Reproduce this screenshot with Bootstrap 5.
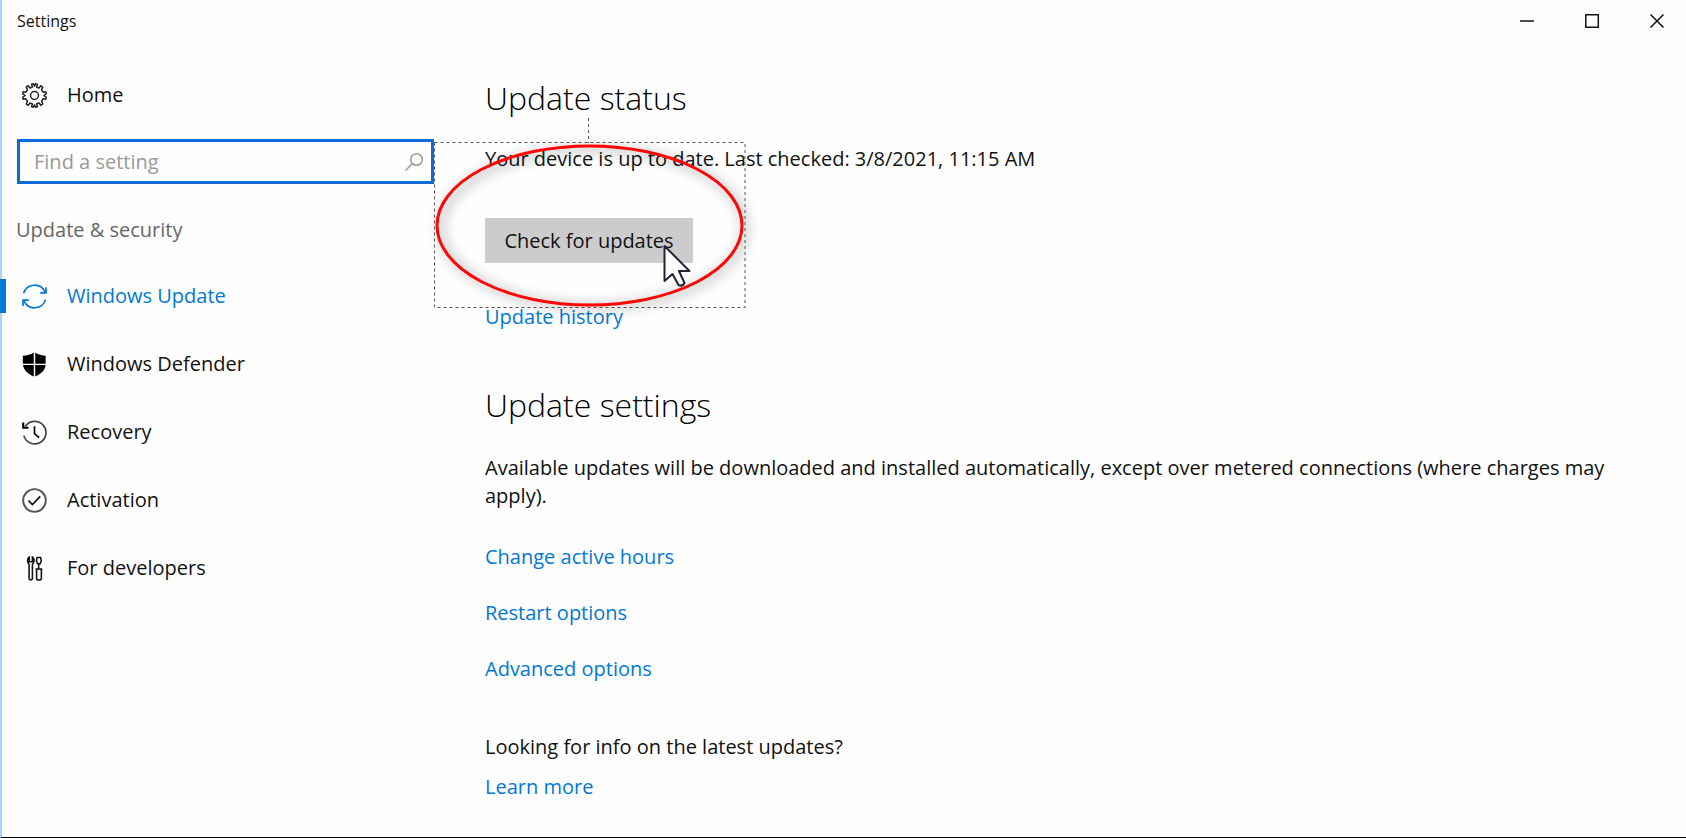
<!DOCTYPE html>
<html lang="en">
<head>
<meta charset="utf-8">
<meta name="viewport" content="width=device-width, initial-scale=1">
<title>Settings</title>
<link href="https://cdn.jsdelivr.net/npm/bootstrap@5.3.0/dist/css/bootstrap.min.css" rel="stylesheet">
<style>
  :root { --accent: #0078d7; }
  body { font-family: "Open Sans", "Noto Sans", sans-serif; font-size: 20px; line-height: 28px; color: #111; background: #fefefe; }
  .window { border-left: 2px solid #a6d2fd; border-bottom: 1px solid #000; }
  .titlebar { height: 42px; padding-left: 15px; font-size: 16px; overflow: hidden; }
  .caption-buttons { margin-right: -3px; }
  .titlebar button { width: 65px; height: 42px; padding: 0 0 4px; color: #111; background: none; }
  .sidebar { flex: 0 0 432px; padding-top: 39px; }
  .side-link { height: 34px; padding-left: 20px; gap: 20px; color: #111; text-decoration: none; position: relative; }
  .side-link svg { width: 25px; height: 25px; flex: none; }
  .side-link.active { color: var(--accent); }
  .side-link.active::before { content: ""; position: absolute; left: -2px; top: 0; width: 6px; height: 34px; background: var(--accent); }
  .home { height: 28px; }
  .search { height: 45px; margin: 30px 0 32px 15px; border: 3px solid #0a6cd6; }
  .search input { font-size: 20px; line-height: 28px; border: 0; outline: 0; background: none; padding: 0 0 0 14px; color: #111; min-width: 0; }
  .search input::placeholder { color: #999; opacity: 1; }
  .search button { background: none; width: 34px; color: #999; }
  .group-name { margin: 0 0 35px 14px; font-size: 20px; line-height: 28px; font-weight: 400; color: #666; }
  .side-list { display: grid; grid-auto-rows: 34px; row-gap: 34px; }
  .content { padding: 34px 60px 35px 51px; }
  .content h1, .content h2 { font-size: 32px; line-height: 44px; font-weight: 300; margin: 0; color: #000; }
  .content a { color: var(--accent); text-decoration: none; }
  .status { margin: 25px 0 45px; }
  .check { width: 208px; height: 45px; background: #ccc; color: #111; }
  .history { margin: 40px 0 52px; }
  .about { margin: 27px 0 33px; }
  .options { gap: 28px; margin-bottom: 50px; }
  .learn { margin-top: 12px; }
  /* callout drawn over the status section */
  .callout-mark { position: absolute; left: 424px; top: 68px; pointer-events: none; }
</style>
</head>
<body>
<div class="window min-vh-100 d-flex flex-column">
  <header class="titlebar d-flex align-items-center justify-content-between">
    <span>Settings</span>
    <div class="caption-buttons d-flex">
      <button type="button" class="border-0" aria-label="Minimize"><svg width="16" height="16" fill="none" stroke="currentColor" stroke-width="1.5"><path d="M1 8h14"/></svg></button>
      <button type="button" class="border-0" aria-label="Maximize"><svg width="16" height="16" fill="none" stroke="currentColor" stroke-width="1.5"><path d="M1.800 1.800h12.500v12.500H1.800z"/></svg></button>
      <button type="button" class="border-0" aria-label="Close"><svg width="16" height="16" fill="none" stroke="currentColor" stroke-width="1.5"><path d="M1.500 1.500l13 13M14.500 1.500l-13 13"/></svg></button>
    </div>
  </header>
  <div class="position-relative d-flex flex-grow-1">
    <nav class="sidebar" aria-label="Settings">
      <a href="#" class="side-link home d-flex align-items-center">
        <svg viewBox="0 0 24 24" fill="none" stroke="#222" stroke-width="1.400" stroke-linejoin="round"><circle cx="12" cy="12" r="3.800"/><path d="M10 3.800 9.200 1.200 11 .8l1 2.200 1-2.200 1.800.4L14 3.800l2.400 1L18 2.600 19.900 4 18.800 6.600l1.400 2.200 2.600-.4.600 1.800-2.400 1.800 2.400 1.800-.6 1.800-2.600-.4-1.400 2.200 1.100 2.600-1.900 1.400-1.600-2.200-2.400 1 .8 2.600-1.800.4-1-2.200-1 2.200-1.800-.4.800-2.600-2.400-1L6 21.400 4.100 20l1.100-2.600-1.400-2.200-2.600.4-.6-1.800L3 12 .6 10.200l.6-1.800 2.600.4 1.400-2.200L4.100 4 6 2.600l1.600 2.200z"/></svg>
        <span>Home</span>
      </a>
      <form class="search d-flex align-items-stretch" role="search">
        <input type="search" class="flex-grow-1" placeholder="Find a setting" aria-label="Find a setting">
        <button type="button" class="border-0 p-0 d-flex align-items-center justify-content-center" aria-label="Search"><svg width="20" height="20" fill="none" stroke="currentColor" stroke-width="1.500"><circle cx="12.500" cy="7.500" r="5.800"/><path d="M8.500 11.500 1.500 18.500"/></svg></button>
      </form>
      <h2 class="group-name">Update &amp; security</h2>
      <div class="side-list">
        <a href="#" class="side-link active d-flex align-items-center" aria-current="page">
          <svg viewBox="0 0 24 24" fill="none" stroke="currentColor" stroke-width="1.600"><path d="M1.500 9A11 11 0 0 1 22 7.500M22.500 15A11 11 0 0 1 2 16.500M23 3v5.500h-5.500M1 21v-5.500h5.500"/></svg>
          <span>Windows Update</span>
        </a>
        <a href="#" class="side-link d-flex align-items-center">
          <svg viewBox="0 0 24 24" fill="#000"><path d="M11.300.5C8.500 2.600 4.500 3.400.8 3.500v7.700h10.500zM12.700.5c2.800 2.100 6.800 2.900 10 3v7.700h-10zM1 12.500h10.300v11C5.500 21 1.600 17.500 1 12.500zM12.700 12.500h10c-.6 5-4.200 8.500-10 11z"/></svg>
          <span>Windows Defender</span>
        </a>
        <a href="#" class="side-link d-flex align-items-center">
          <svg viewBox="0 0 24 24" fill="none" stroke="#444" stroke-width="1.700"><path d="M3.200 6.200A10.800 10.800 0 1 1 1.800 15"/><path d="M1.200 2.500v5h5" stroke="#000" stroke-width="2"/><path d="M12 6v7l4.500 4" stroke="#000" stroke-width="1.600"/></svg>
          <span>Recovery</span>
        </a>
        <a href="#" class="side-link d-flex align-items-center">
          <svg viewBox="0 0 24 24" fill="none" stroke="#555" stroke-width="1.800"><circle cx="12" cy="12" r="10.900"/><path d="M6.200 12.200l3.800 3.800L17.500 8" stroke="#111" stroke-width="1.600"/></svg>
          <span>Activation</span>
        </a>
        <a href="#" class="side-link d-flex align-items-center">
          <svg viewBox="0 0 24 24" fill="none" stroke="#111" stroke-width="1.500"><path d="M7 1v4.500h3V1c2 .8 2.300 5 0 7v13c0 2.500-3.200 2.500-3.200 0V8C4.600 6 5 1.800 7 1zM16 7.500v5M14 12.500h4.600v9c0 2-4.600 2-4.600 0zM13 12.500h6.500M14.500 1.500h3.400l.6 3-1 3h-2.600l-1-3z"/></svg>
          <span>For developers</span>
        </a>
      </div>
    </nav>
    <main class="content flex-grow-1">
      <h1>Update status</h1>
      <p class="status">Your device is up to date. Last checked: 3/8/2021, 11:15 AM</p>
      <button type="button" class="check border-0 p-0 d-block">Check for updates</button>
      <div class="history"><a href="#">Update history</a></div>
      <h2>Update settings</h2>
      <p class="about">Available updates will be downloaded and installed automatically, except over metered connections (where charges may apply).</p>
      <div class="options d-flex flex-column align-items-start">
        <a href="#">Change active hours</a>
        <a href="#">Restart options</a>
        <a href="#">Advanced options</a>
      </div>
      <div>Looking for info on the latest updates?</div>
      <div class="learn"><a href="#">Learn more</a></div>
    </main>
    <svg class="callout-mark" width="340" height="220" viewBox="426 110 340 220" fill="none" aria-hidden="true">
      <defs><filter id="soft" x="-10%" y="-15%" width="120%" height="130%"><feGaussianBlur stdDeviation="6"/></filter></defs>
      <ellipse cx="593" cy="228" rx="152" ry="79" stroke="#000" stroke-opacity=".2" stroke-width="8" filter="url(#soft)"/>
      <path d="M588.500 118v25M434.500 142.500h310.500v165H434.500z" stroke="#555" stroke-dasharray="3 3"/>
      <ellipse cx="589.500" cy="225.500" rx="152.500" ry="79.500" stroke="#ff0505" stroke-width="3"/>
      <path d="M664.500 246v35l8-7 6 11q4 2 6-2l-5.500-12h10.500z" fill="#fff" stroke="#223" stroke-width="2" stroke-linejoin="round"/>
    </svg>
  </div>
</div>
<script src="https://cdn.jsdelivr.net/npm/bootstrap@5.3.0/dist/js/bootstrap.bundle.min.js"></script>
</body>
</html>
